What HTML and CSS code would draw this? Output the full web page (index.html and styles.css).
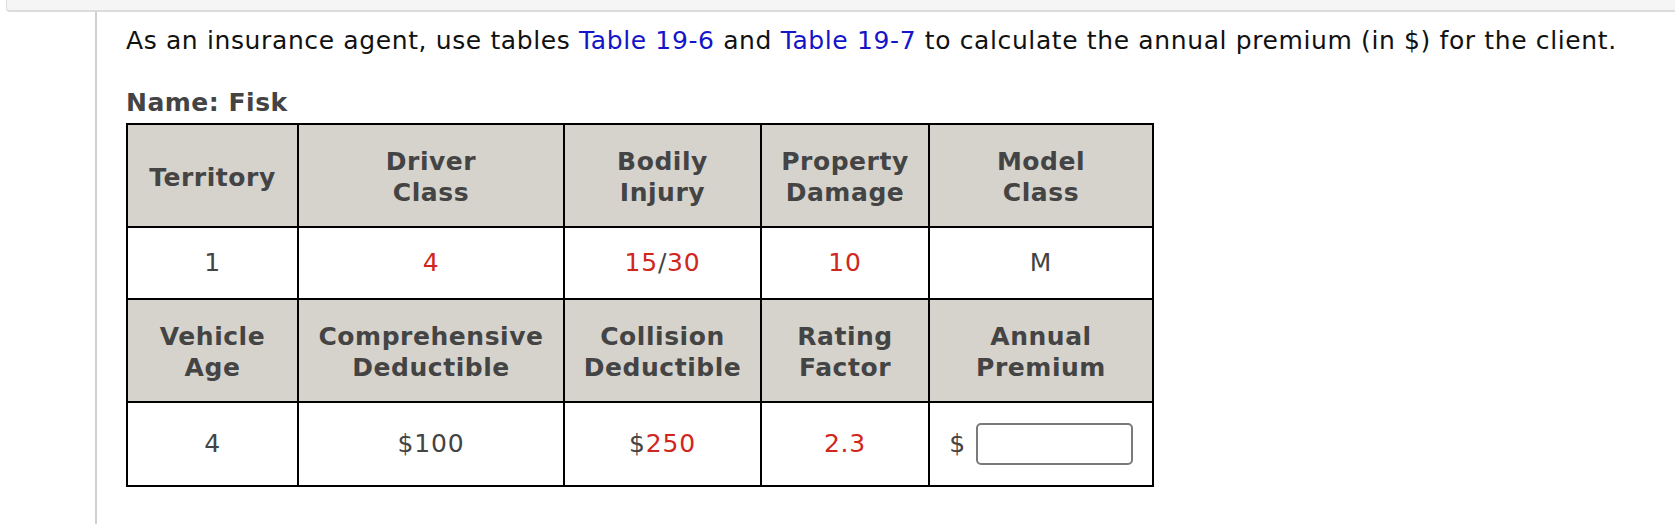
FILE: index.html
```html
<!DOCTYPE html>
<html>
<head>
<meta charset="utf-8">
<link rel="stylesheet" href="styles.css">
</head>
<body>
<div class="topbar"></div>
<div class="main">
  <p class="prompt">As an insurance agent, use tables <a class="link">Table 19-6</a> and <a class="link">Table 19-7</a> to calculate the annual premium (in $) for the client.</p>
  <p class="name">Name: Fisk</p>
  <table class="grid">
    <colgroup>
      <col class="c1"><col class="c2"><col class="c3"><col class="c4"><col class="c5">
    </colgroup>
    <tr class="head">
      <th>Territory</th>
      <th>Driver<br>Class</th>
      <th>Bodily<br>Injury</th>
      <th>Property<br>Damage</th>
      <th>Model<br>Class</th>
    </tr>
    <tr class="data1">
      <td>1</td>
      <td><span class="red">4</span></td>
      <td><span class="red">15</span>/<span class="red">30</span></td>
      <td><span class="red">10</span></td>
      <td>M</td>
    </tr>
    <tr class="head">
      <th>Vehicle<br>Age</th>
      <th>Comprehensive<br>Deductible</th>
      <th>Collision<br>Deductible</th>
      <th>Rating<br>Factor</th>
      <th>Annual<br>Premium</th>
    </tr>
    <tr class="data2">
      <td>4</td>
      <td>$100</td>
      <td>$<span class="red">250</span></td>
      <td><span class="red">2.3</span></td>
      <td><span class="dollar">$</span><input class="answer" type="text"></td>
    </tr>
  </table>
</div>
</body>
</html>
```

FILE: styles.css
```css
html, body {
  margin: 0;
  padding: 0;
  background: #ffffff;
  font-family: "DejaVu Sans", Verdana, sans-serif;
}

.topbar {
  margin-left: 6px;
  height: 10px;
  background: #f5f5f5;
  border-left: 1px solid #dcdcdc;
  border-bottom: 2px solid #dcdcdc;
  border-bottom-left-radius: 4px;
}

.main {
  margin-left: 95px;
  border-left: 2px solid #d0d0d0;
  padding-left: 29px;
  height: 512px;
  box-sizing: border-box;
  padding-top: 15px;
}

.prompt {
  margin: 0;
  font-size: 25px;
  letter-spacing: 0.62px;
  line-height: 28px;
  color: #111;
}

.link {
  color: #1414c8;
  text-decoration: none;
}

.name {
  margin: 33px 0 0;
  font-size: 25px;
  letter-spacing: 0.5px;
  line-height: 29px;
  font-weight: bold;
  color: #444;
}

.grid {
  margin-top: 6px;
  border-collapse: collapse;
  table-layout: fixed;
  border: 2px solid #000;
}

.c1 { width: 171px; }
.c2 { width: 266px; }
.c3 { width: 197px; }
.c4 { width: 168px; }
.c5 { width: 224px; }

.grid th,
.grid td {
  border: 2px solid #000;
  padding: 0;
  text-align: center;
  vertical-align: middle;
  color: #444;
}

.grid th {
  background: #d6d3cc;
  font-size: 25px;
  letter-spacing: 0.55px;
  line-height: 31px;
  font-weight: bold;
  padding-top: 3px;
}

.grid td {
  font-size: 25px;
  letter-spacing: 0.8px;
  line-height: 28px;
}

.head th { height: 98px; }
.data1 td { height: 70px; }
.head + .data2 td { height: 82px; }

.red {
  color: #d0271d;
}

.dollar {
  vertical-align: middle;
}

.answer {
  width: 157px;
  height: 42px;
  box-sizing: border-box;
  margin-left: 10px;
  border: 2px solid #7a7a7a;
  border-radius: 5px;
  vertical-align: middle;
  padding: 0;
  background: #fff;
}
```
